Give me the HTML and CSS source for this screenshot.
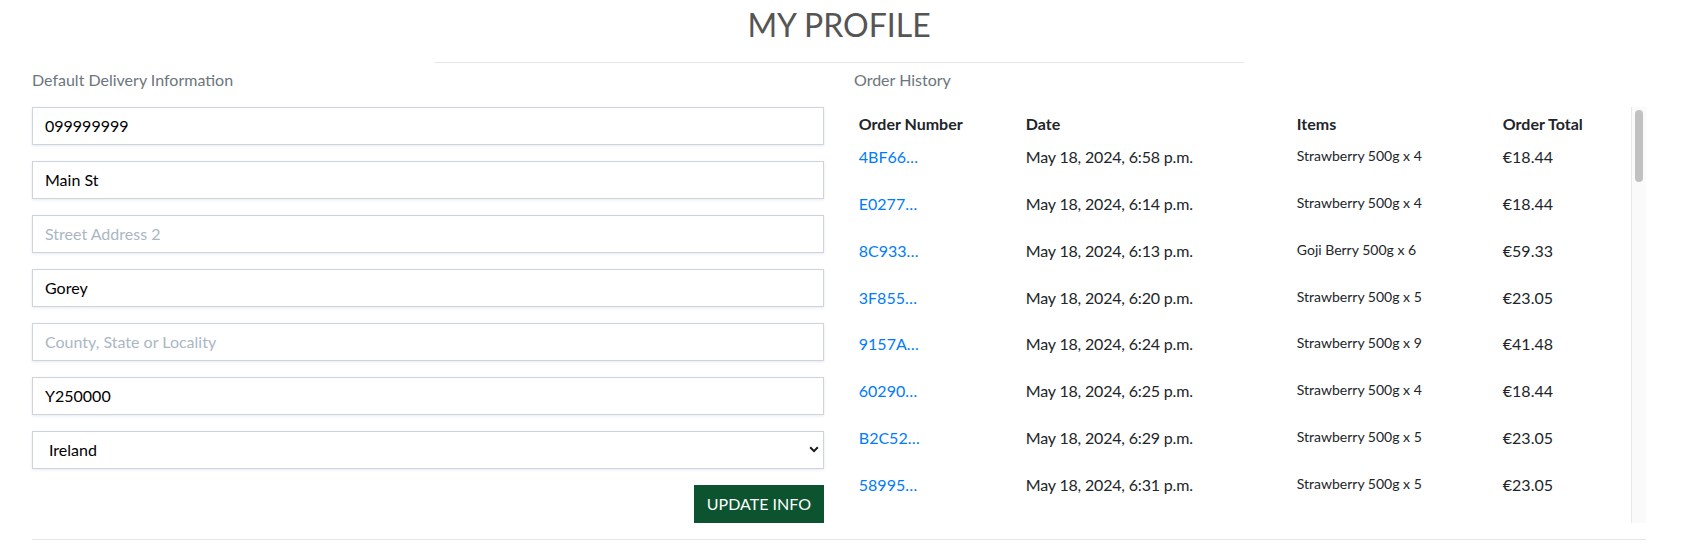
FILE: index.html
```html
<!DOCTYPE html>
<html lang="en">
<head>
<meta charset="utf-8">
<title>My Profile</title>
<link rel="stylesheet" href="styles.css">
</head>
<body>
<div class="page">
  <header class="page-head">
    <h2 class="page-title">My Profile</h2>
    <hr class="rule rule-title">
  </header>
  <div class="columns">
    <section class="col">
      <p class="muted">Default Delivery Information</p>
      <form class="profile-form">
        <input class="field" type="text" value="099999999">
        <input class="field" type="text" value="Main St">
        <input class="field" type="text" placeholder="Street Address 2">
        <input class="field" type="text" value="Gorey">
        <input class="field" type="text" placeholder="County, State or Locality">
        <input class="field" type="text" value="Y250000">
        <div class="select-wrap">
          <select class="field select"><option>Ireland</option></select>
          <svg class="chev" width="10" height="7" viewBox="0 0 10 7"><path d="M1.2 1.3L5 5.1L8.8 1.3" fill="none" stroke="#1a1a1a" stroke-width="2"/></svg>
        </div>
        <div class="actions"><button class="btn-green" type="button">Update Info</button></div>
      </form>
    </section>
    <section class="col">
      <p class="muted">Order History</p>
      <div class="history-box">
        <div class="order-history">
          <table class="orders">
            <colgroup><col class="c1"><col class="c2"><col class="c3"><col class="c4"></colgroup>
            <thead>
              <tr><th>Order Number</th><th>Date</th><th>Items</th><th>Order Total</th></tr>
            </thead>
            <tbody>
              <tr><td><a class="order-link" href="#">4BF66…</a></td><td class="date">May 18, 2024, 6:58 p.m.</td><td><ul class="items"><li>Strawberry 500g x 4</li></ul></td><td>€18.44</td></tr>
              <tr><td><a class="order-link" href="#">E0277…</a></td><td class="date">May 18, 2024, 6:14 p.m.</td><td><ul class="items"><li>Strawberry 500g x 4</li></ul></td><td>€18.44</td></tr>
              <tr><td><a class="order-link" href="#">8C933…</a></td><td class="date">May 18, 2024, 6:13 p.m.</td><td><ul class="items"><li>Goji Berry 500g x 6</li></ul></td><td>€59.33</td></tr>
              <tr><td><a class="order-link" href="#">3F855…</a></td><td class="date">May 18, 2024, 6:20 p.m.</td><td><ul class="items"><li>Strawberry 500g x 5</li></ul></td><td>€23.05</td></tr>
              <tr><td><a class="order-link" href="#">9157A…</a></td><td class="date">May 18, 2024, 6:24 p.m.</td><td><ul class="items"><li>Strawberry 500g x 9</li></ul></td><td>€41.48</td></tr>
              <tr><td><a class="order-link" href="#">60290…</a></td><td class="date">May 18, 2024, 6:25 p.m.</td><td><ul class="items"><li>Strawberry 500g x 4</li></ul></td><td>€18.44</td></tr>
              <tr><td><a class="order-link" href="#">B2C52…</a></td><td class="date">May 18, 2024, 6:29 p.m.</td><td><ul class="items"><li>Strawberry 500g x 5</li></ul></td><td>€23.05</td></tr>
              <tr><td><a class="order-link" href="#">58995…</a></td><td class="date">May 18, 2024, 6:31 p.m.</td><td><ul class="items"><li>Strawberry 500g x 5</li></ul></td><td>€23.05</td></tr>
              <tr><td><a class="order-link" href="#">A41C7…</a></td><td class="date">May 18, 2024, 6:35 p.m.</td><td><ul class="items"><li>Strawberry 500g x 3</li></ul></td><td>€13.83</td></tr>
              <tr><td><a class="order-link" href="#">2E8B0…</a></td><td class="date">May 18, 2024, 6:40 p.m.</td><td><ul class="items"><li>Goji Berry 500g x 2</li></ul></td><td>€19.78</td></tr>
              <tr><td><a class="order-link" href="#">C7D19…</a></td><td class="date">May 18, 2024, 6:44 p.m.</td><td><ul class="items"><li>Strawberry 500g x 4</li></ul></td><td>€18.44</td></tr>
              <tr><td><a class="order-link" href="#">6F03A…</a></td><td class="date">May 18, 2024, 6:47 p.m.</td><td><ul class="items"><li>Strawberry 500g x 2</li></ul></td><td>€9.22</td></tr>
              <tr><td><a class="order-link" href="#">D5E82…</a></td><td class="date">May 18, 2024, 6:52 p.m.</td><td><ul class="items"><li>Strawberry 500g x 6</li></ul></td><td>€27.66</td></tr>
              <tr><td><a class="order-link" href="#">1B9F4…</a></td><td class="date">May 19, 2024, 9:05 a.m.</td><td><ul class="items"><li>Goji Berry 500g x 3</li></ul></td><td>€29.67</td></tr>
              <tr><td><a class="order-link" href="#">8A2D6…</a></td><td class="date">May 19, 2024, 9:12 a.m.</td><td><ul class="items"><li>Strawberry 500g x 4</li></ul></td><td>€18.44</td></tr>
              <tr><td><a class="order-link" href="#">F3C71…</a></td><td class="date">May 19, 2024, 9:30 a.m.</td><td><ul class="items"><li>Strawberry 500g x 7</li></ul></td><td>€32.27</td></tr>
              <tr><td><a class="order-link" href="#">4E6B2…</a></td><td class="date">May 19, 2024, 10:02 a.m.</td><td><ul class="items"><li>Strawberry 500g x 2</li></ul></td><td>€9.22</td></tr>
              <tr><td><a class="order-link" href="#">0D7A9…</a></td><td class="date">May 19, 2024, 10:15 a.m.</td><td><ul class="items"><li>Goji Berry 500g x 4</li></ul></td><td>€39.55</td></tr>
              <tr><td><a class="order-link" href="#">93B5E…</a></td><td class="date">May 19, 2024, 11:48 a.m.</td><td><ul class="items"><li>Strawberry 500g x 5</li></ul></td><td>€23.05</td></tr>
              <tr><td><a class="order-link" href="#">7C1F0…</a></td><td class="date">May 19, 2024, 12:20 p.m.</td><td><ul class="items"><li>Strawberry 500g x 3</li></ul></td><td>€13.83</td></tr>
              <tr><td><a class="order-link" href="#">E58D3…</a></td><td class="date">May 19, 2024, 1:04 p.m.</td><td><ul class="items"><li>Strawberry 500g x 4</li></ul></td><td>€18.44</td></tr>
              <tr><td><a class="order-link" href="#">2A9C6…</a></td><td class="date">May 19, 2024, 1:37 p.m.</td><td><ul class="items"><li>Goji Berry 500g x 5</li></ul></td><td>€49.44</td></tr>
              <tr><td><a class="order-link" href="#">B60F1…</a></td><td class="date">May 19, 2024, 2:15 p.m.</td><td><ul class="items"><li>Strawberry 500g x 5</li></ul></td><td>€23.05</td></tr>
              <tr><td><a class="order-link" href="#">51D8E…</a></td><td class="date">May 19, 2024, 3:02 p.m.</td><td><ul class="items"><li>Strawberry 500g x 8</li></ul></td><td>€36.88</td></tr>
              <tr><td><a class="order-link" href="#">C2E47…</a></td><td class="date">May 19, 2024, 3:46 p.m.</td><td><ul class="items"><li>Strawberry 500g x 4</li></ul></td><td>€18.44</td></tr>
              <tr><td><a class="order-link" href="#">8F6A3…</a></td><td class="date">May 19, 2024, 4:21 p.m.</td><td><ul class="items"><li>Goji Berry 500g x 2</li></ul></td><td>€19.78</td></tr>
              <tr><td><a class="order-link" href="#">0B4C9…</a></td><td class="date">May 19, 2024, 5:10 p.m.</td><td><ul class="items"><li>Strawberry 500g x 6</li></ul></td><td>€27.66</td></tr>
              <tr><td><a class="order-link" href="#">D9A15…</a></td><td class="date">May 19, 2024, 5:55 p.m.</td><td><ul class="items"><li>Strawberry 500g x 3</li></ul></td><td>€13.83</td></tr>
              <tr><td><a class="order-link" href="#">7E2B8…</a></td><td class="date">May 20, 2024, 8:41 a.m.</td><td><ul class="items"><li>Strawberry 500g x 4</li></ul></td><td>€18.44</td></tr>
              <tr><td><a class="order-link" href="#">36F0D…</a></td><td class="date">May 20, 2024, 9:26 a.m.</td><td><ul class="items"><li>Goji Berry 500g x 6</li></ul></td><td>€59.33</td></tr>
              <tr><td><a class="order-link" href="#">A8C2F…</a></td><td class="date">May 20, 2024, 10:03 a.m.</td><td><ul class="items"><li>Strawberry 500g x 5</li></ul></td><td>€23.05</td></tr>
              <tr><td><a class="order-link" href="#">F1D74…</a></td><td class="date">May 20, 2024, 10:58 a.m.</td><td><ul class="items"><li>Strawberry 500g x 2</li></ul></td><td>€9.22</td></tr>
              <tr><td><a class="order-link" href="#">4C8E0…</a></td><td class="date">May 20, 2024, 11:34 a.m.</td><td><ul class="items"><li>Strawberry 500g x 9</li></ul></td><td>€41.48</td></tr>
              <tr><td><a class="order-link" href="#">92B6A…</a></td><td class="date">May 20, 2024, 12:12 p.m.</td><td><ul class="items"><li>Goji Berry 500g x 3</li></ul></td><td>€29.67</td></tr>
              <tr><td><a class="order-link" href="#">E7A31…</a></td><td class="date">May 20, 2024, 1:49 p.m.</td><td><ul class="items"><li>Strawberry 500g x 4</li></ul></td><td>€18.44</td></tr>
              <tr><td><a class="order-link" href="#">3D5F9…</a></td><td class="date">May 20, 2024, 2:27 p.m.</td><td><ul class="items"><li>Strawberry 500g x 5</li></ul></td><td>€23.05</td></tr>
              <tr><td><a class="order-link" href="#">B81E6…</a></td><td class="date">May 20, 2024, 3:05 p.m.</td><td><ul class="items"><li>Strawberry 500g x 3</li></ul></td><td>€13.83</td></tr>
              <tr><td><a class="order-link" href="#">6A0C2…</a></td><td class="date">May 20, 2024, 3:50 p.m.</td><td><ul class="items"><li>Goji Berry 500g x 4</li></ul></td><td>€39.55</td></tr>
              <tr><td><a class="order-link" href="#">C49B7…</a></td><td class="date">May 20, 2024, 4:38 p.m.</td><td><ul class="items"><li>Strawberry 500g x 6</li></ul></td><td>€27.66</td></tr>
              <tr><td><a class="order-link" href="#">15E8D…</a></td><td class="date">May 20, 2024, 5:14 p.m.</td><td><ul class="items"><li>Strawberry 500g x 4</li></ul></td><td>€18.44</td></tr>
              <tr><td><a class="order-link" href="#">D0F36…</a></td><td class="date">May 20, 2024, 6:02 p.m.</td><td><ul class="items"><li>Strawberry 500g x 7</li></ul></td><td>€32.27</td></tr>
              <tr><td><a class="order-link" href="#">8B7A4…</a></td><td class="date">May 21, 2024, 9:18 a.m.</td><td><ul class="items"><li>Goji Berry 500g x 2</li></ul></td><td>€19.78</td></tr>
              <tr><td><a class="order-link" href="#">F52C0…</a></td><td class="date">May 21, 2024, 10:44 a.m.</td><td><ul class="items"><li>Strawberry 500g x 5</li></ul></td><td>€23.05</td></tr>
              <tr><td><a class="order-link" href="#">29D6B…</a></td><td class="date">May 21, 2024, 11:30 a.m.</td><td><ul class="items"><li>Strawberry 500g x 4</li></ul></td><td>€18.44</td></tr>
              <tr><td><a class="order-link" href="#">A73E5…</a></td><td class="date">May 21, 2024, 1:16 p.m.</td><td><ul class="items"><li>Strawberry 500g x 2</li></ul></td><td>€9.22</td></tr>
              <tr><td><a class="order-link" href="#">5C1F8…</a></td><td class="date">May 21, 2024, 2:52 p.m.</td><td><ul class="items"><li>Goji Berry 500g x 6</li></ul></td><td>€59.33</td></tr>
              <tr><td><a class="order-link" href="#">E04A9…</a></td><td class="date">May 21, 2024, 4:07 p.m.</td><td><ul class="items"><li>Strawberry 500g x 3</li></ul></td><td>€13.83</td></tr>
            </tbody>
          </table>
        </div>
        <div class="scroll-track" aria-hidden="true"><div class="scroll-thumb"></div></div>
      </div>
    </section>
  </div>
  <hr class="rule rule-bottom">
</div>
</body>
</html>
```
FILE: styles.css
```css
* { box-sizing: border-box; }

html, body {
  margin: 0;
  padding: 0;
}

body {
  font-family: Lato, "Noto Sans", sans-serif;
  font-size: 16px;
  line-height: 1.5;
  color: #212529;
  background: #fff;
  overflow: hidden;
}

.page {
  width: 1614px;
  margin-left: 32px;
}

.page-head {
  display: flex;
  flex-direction: column;
  align-items: center;
  padding-top: 6px;
}

.page-title {
  margin: 0;
  font-size: 32px;
  font-weight: 400;
  line-height: 1.2;
  color: #555;
  text-transform: uppercase;
}

.rule {
  border: 0;
  border-top: 1px solid #e6e6e6;
  margin: 0;
  height: 0;
}

.rule-title {
  width: 809px;
  margin-top: 17.6px;
}

.rule-bottom {
  width: 1614px;
  margin-top: 16px;
}

.columns {
  display: grid;
  grid-template-columns: 792px 792px;
  column-gap: 30px;
  padding-top: 5px;
}

.muted {
  margin: 0 0 15px;
  color: #6c757d;
}

.profile-form {
  display: flex;
  flex-direction: column;
}

.field {
  display: block;
  width: 100%;
  height: 38px;
  margin: 0 0 16px;
  padding: 6px 12px;
  border: 1px solid #ced4da;
  border-radius: 0;
  background: #fff;
  font-family: inherit;
  font-size: 16px;
  line-height: 1.5;
  color: #000;
  box-shadow: 0 1px 3px 0 #e6ebf1;
  outline: none;
}

.field::placeholder {
  color: #aab7c4;
  opacity: 1;
}

.select-wrap {
  position: relative;
}

.select {
  appearance: none;
  -webkit-appearance: none;
  padding-left: 16px;
}

.chev {
  position: absolute;
  right: 5px;
  top: 15px;
  pointer-events: none;
}

.actions {
  display: flex;
  justify-content: flex-end;
}

.btn-green {
  height: 38px;
  padding: 6px 12px;
  border: 1px solid #0c5430;
  border-radius: 0;
  background: #0c5430;
  color: #fff;
  font-family: inherit;
  font-size: 16px;
  line-height: 1.5;
  text-transform: uppercase;
  cursor: pointer;
}

.history-box {
  display: flex;
  height: 416px;
}

.order-history {
  flex: 0 0 777px;
  height: 416px;
  overflow-y: auto;
  scrollbar-width: none;
}

.order-history::-webkit-scrollbar {
  display: none;
}

.scroll-track {
  flex: 0 0 15px;
  height: 416px;
  padding: 3px 3px 0 3px;
  background: #fafafa;
  border-left: 1px solid #e8e8e8;
}

.scroll-thumb {
  width: 8px;
  height: 72px;
  border-radius: 4px;
  background: #c1c1c1;
}

.orders {
  width: 777px;
  border-collapse: collapse;
  table-layout: fixed;
}

.c1 { width: 167px; }
.c2 { width: 271px; }
.c3 { width: 206px; }
.c4 { width: 133px; }

.orders th {
  text-align: left;
  font-weight: 700;
  padding: 4.8px 4.8px 4.6px;
  vertical-align: bottom;
  white-space: nowrap;
}

.orders td {
  padding: 4.8px;
  vertical-align: top;
  white-space: nowrap;
}

.orders td.date {
  letter-spacing: -0.18px;
}

.order-link {
  color: #007bff;
  text-decoration: none;
}

.items {
  list-style: none;
  margin: 0 0 16.2px;
  padding: 0;
  font-size: 14px;
  line-height: 1.5;
}
```
